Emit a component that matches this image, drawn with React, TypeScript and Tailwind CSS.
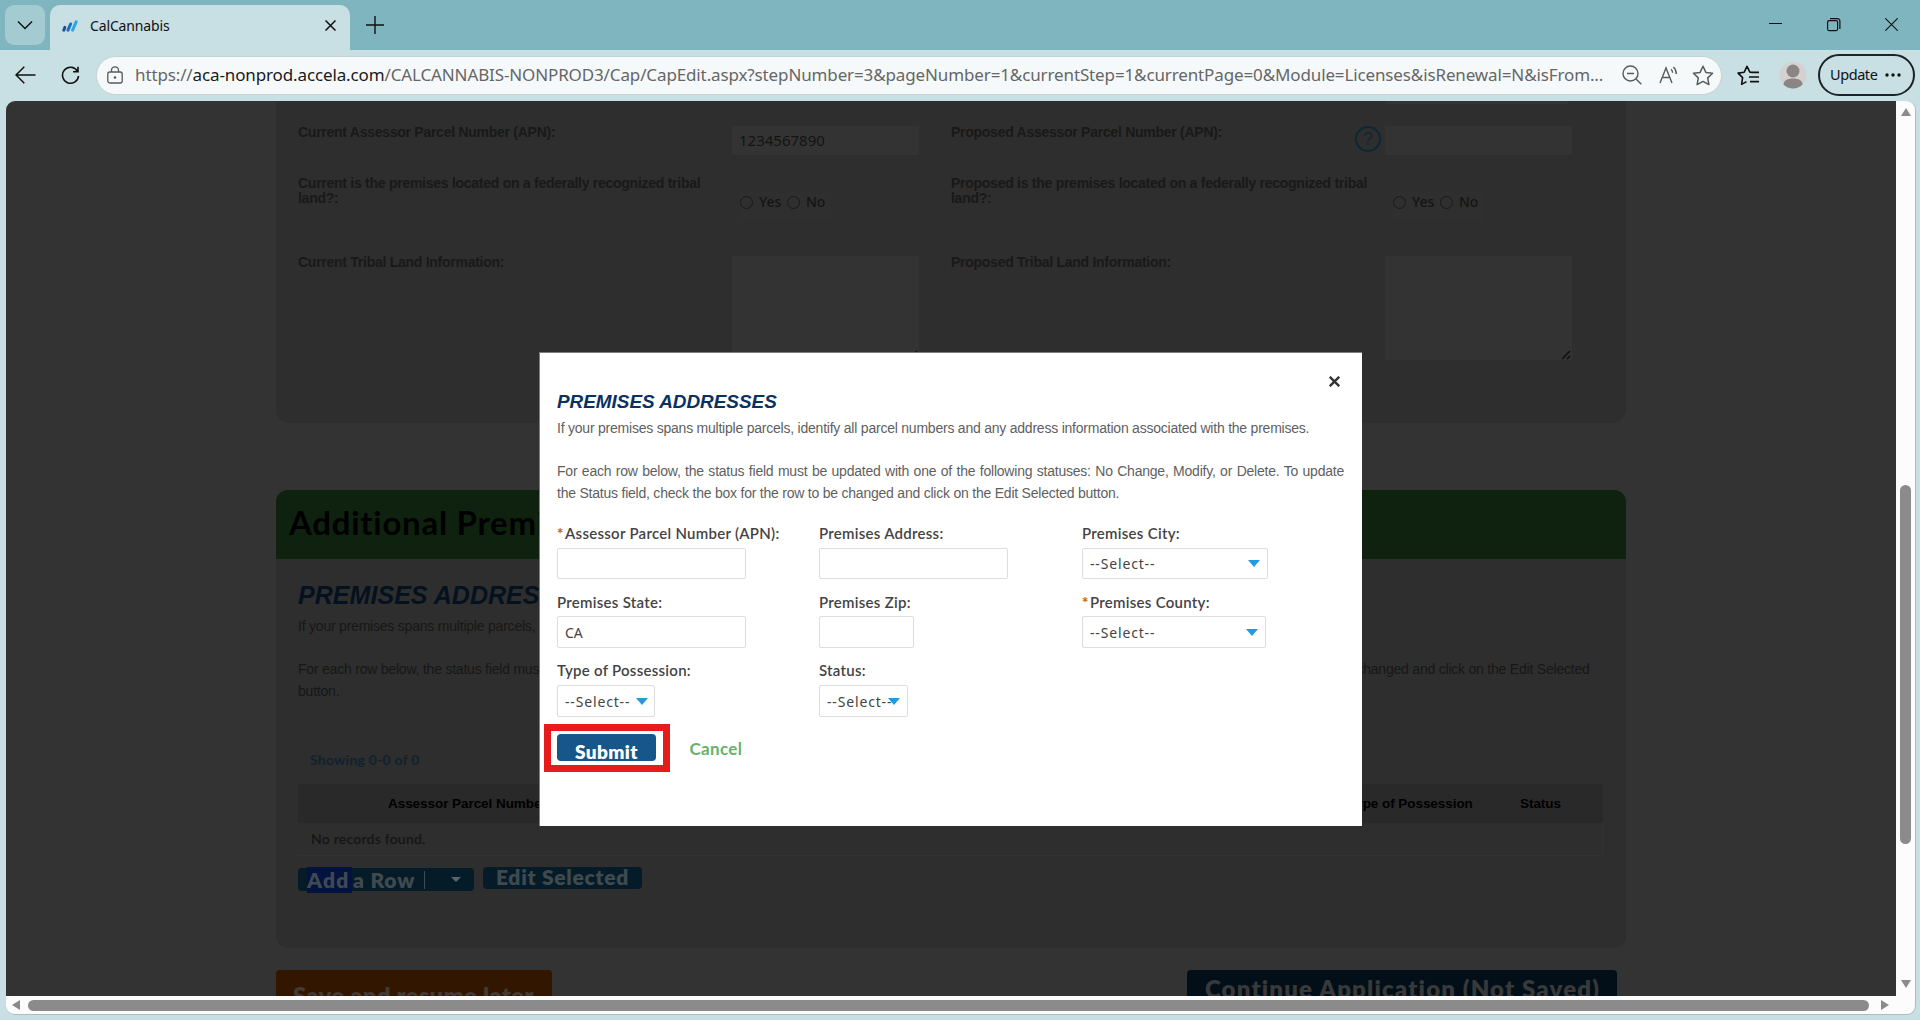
import type { ReactNode } from "react";

function TitleBar() {
  return (
    <div className="flex h-[50px] shrink-0 bg-[#7eb5be] pl-[5px]">
      <div className="mt-[5px] flex h-10 w-10 items-center justify-center rounded-[9px] bg-[#a4cbd2]">
        <svg width="16" height="10" viewBox="0 0 16 10" fill="none" stroke="#111" strokeWidth="1.5">
          <path d="M1 1.5l7 7 7-7" />
        </svg>
      </div>
      <div className="ml-[5px] mt-[5px] flex h-[45px] w-[300px] items-center rounded-t-[10px] bg-[#c8dfe4] pb-[4px] pl-[12px] pr-[14px]">
        <svg width="16" height="12" viewBox="0 0 16 12" fill="none" strokeLinecap="round" strokeWidth="3">
          <path d="M1.8 10.2L2.8 7.4" stroke="#1c4f9c" />
          <path d="M6 10.2L8.6 4" stroke="#1f6fc0" />
          <path d="M10.6 10.2L14.2 1.8" stroke="#27a9e6" />
        </svg>
        <span className="ml-[12px] flex-1 font-['Noto_Sans',sans-serif] text-[14px] tracking-[-0.01em] text-[#111]">CalCannabis</span>
        <svg width="11" height="11" viewBox="0 0 11 11" stroke="#111" strokeWidth="1.5">
          <path d="M0.5 0.5l10 10M10.5 0.5l-10 10" />
        </svg>
      </div>
      <svg className="ml-[16px] mt-[16px]" width="18" height="18" viewBox="0 0 18 18" stroke="#111" strokeWidth="1.4">
        <path d="M9 0v18M0 9h18" />
      </svg>
      <div className="ml-auto flex pr-[22px] pt-[18px]">
        <svg width="13" height="13" viewBox="0 0 13 13" stroke="#111">
          <path d="M0 5.5h13" />
        </svg>
        <svg className="ml-[45px]" width="14" height="14" viewBox="0 0 14 14" fill="none" stroke="#111" strokeWidth="1.2">
          <rect x="0.6" y="2.6" width="10" height="10" rx="1.5" />
          <path d="M3 0.7h7.5a2.4 2.4 0 0 1 2.4 2.4v8" />
        </svg>
        <svg className="ml-[44px]" width="13" height="13" viewBox="0 0 13 13" stroke="#111" strokeWidth="1.1">
          <path d="M0.3 0.3l12.4 12.4M12.7 0.3L0.3 12.7" />
        </svg>
      </div>
    </div>
  );
}

function AddressBar() {
  return (
    <div className="flex h-[51px] shrink-0 items-center bg-[#c8dfe4] pb-px pl-[15px] pr-[5px]">
      <svg width="21" height="18" viewBox="0 0 21 18" fill="none" stroke="#111" strokeWidth="1.5">
        <path d="M20.5 9H1M9.3 0.8L1 9l8.3 8.2" />
      </svg>
      <svg className="ml-[25px]" width="19" height="19" viewBox="0 0 19 19" fill="none" stroke="#111" strokeWidth="1.6">
        <path d="M16.3 5A8 8 0 1 0 17.5 10M17 0.8v4.9h-5" />
      </svg>
      <div className="ml-[16px] flex h-[39px] w-[1626px] items-center rounded-full border border-[#c5d3d6] bg-[#f6f9fa] pl-[10px] pr-[6px]">
        <svg width="16" height="18" viewBox="0 0 16 18" fill="none" stroke="#5a5a5a" strokeWidth="1.3">
          <rect x="0.8" y="6" width="14.4" height="11" rx="2" />
          <path d="M4.5 6V4.3a3.5 3.5 0 0 1 7 0V6" />
          <circle cx="8" cy="11.5" r="0.7" fill="#5a5a5a" />
        </svg>
        <div className="ml-[12px] w-[1484px] whitespace-nowrap font-['Noto_Sans',sans-serif] text-[17px] tracking-[-0.0075em] text-[#666]">
          https://<span className="text-[#1a1a1a]">aca-nonprod.accela.com</span>
          /CALCANNABIS-NONPROD3/Cap/CapEdit.aspx?stepNumber=3&amp;pageNumber=1&amp;currentStep=1&amp;currentPage=0&amp;Module=Licenses&amp;isRenewal=N&amp;isFrom...
        </div>
        <svg className="ml-[3px]" width="20" height="20" viewBox="0 0 20 20" fill="none" stroke="#5a5a5a" strokeWidth="1.4">
          <circle cx="8.5" cy="8.5" r="7.5" />
          <path d="M14 14l5.3 5.3M5 8.5h7" />
        </svg>
        <svg className="ml-[17px]" width="20" height="18" viewBox="0 0 20 18" fill="none" stroke="#5a5a5a" strokeWidth="1.4">
          <path d="M1 17L7 2l6 15M3.2 11.5h7.6M12 3.2c1 .8 1.6 2 1.6 3.6M14.4 1c1.9 1.6 2.9 3.8 2.9 7" />
        </svg>
        <svg className="ml-[13px]" width="22" height="21" viewBox="0 0 22 21" fill="none" stroke="#5a5a5a" strokeWidth="1.5" strokeLinejoin="round">
          <path d="M11 1.3l2.9 6.1 6.7.9-4.9 4.6 1.2 6.7L11 16.4l-5.9 3.2 1.2-6.7L1.4 8.3l6.7-.9z" />
        </svg>
      </div>
      <svg className="ml-[15px]" width="23" height="21" viewBox="0 0 23 21" fill="none" stroke="#111" strokeWidth="1.6" strokeLinejoin="round">
        <path d="M15.5 7.4l-2.6-.2L10 1.3 7.2 7.2l-6.1.9 4.5 4.5-1 6.8 4.9-2.8M14 7.4h8M12 12h10M13 16.6h9" />
      </svg>
      <svg className="ml-[19px]" width="28" height="28" viewBox="0 0 28 28">
        <circle cx="14" cy="14" r="13.5" fill="#d5d1cf" />
        <circle cx="14" cy="10" r="6.5" fill="#8b8685" />
        <path d="M4.5 23.5c0-4 4-6 9.500-6s9.500 2 9.500 6A13.500 13.500 0 0 1 4.500 23.500z" fill="#8b8685" />
      </svg>
      <div className="ml-auto flex h-[42px] w-[97px] items-center rounded-full border-2 border-[#1c2325] pl-[10px]">
        <span className="font-['Noto_Sans',sans-serif] text-[14.500px] tracking-[-0.03em] text-[#111]">Update</span>
        <svg className="ml-[8px]" width="16" height="4" viewBox="0 0 16 4" fill="#111">
          <circle cx="2" cy="2" r="1.7" />
          <circle cx="8" cy="2" r="1.7" />
          <circle cx="14" cy="2" r="1.7" />
        </svg>
      </div>
    </div>
  );
}

function PageLabel({ children }: { children: ReactNode }) {
  return (
    <div className="w-[434px] shrink-0 pr-1 pt-px text-[14px] font-bold leading-[15px] tracking-[-0.019em] text-[#191919]">{children}</div>
  );
}

function YesNo() {
  return (
    <div className="ml-[7px] mt-[17px] flex h-[30px] w-[93px] bg-[#2f2f2f] pl-px font-['Noto_Sans',sans-serif] text-[14px] font-medium leading-[20px] text-[#141414]">
      <span className="mt-[4px] h-[13px] w-[13px] rounded-full border border-[#191919]" />
      <span className="ml-[6px] w-[28px]">Yes</span>
      <span className="mt-[4px] h-[13px] w-[13px] rounded-full border border-[#191919]" />
      <span className="ml-[6px]">No</span>
    </div>
  );
}

function TextArea() {
  return (
    <div className="mt-[2px] flex h-[104px] w-[187px] items-end justify-end bg-[#333]">
      <svg width="11" height="11" viewBox="0 0 11 11" stroke="#0c0c0c" strokeWidth="1.4">
        <path d="M1 10l8-8M6 10l3-3" />
      </svg>
    </div>
  );
}

function ParcelPanel() {
  return (
    <div className="h-[322px] rounded-b-[14px] bg-[#2e2e2e] pl-[22px]">
      <div className="ml-[1087px] h-[3px] w-[183px] bg-[#333]" />
      <div className="mt-[20px] grid grid-cols-[653px_653px] grid-rows-[51px_79px_120px]">
        <div className="flex">
          <PageLabel>Current Assessor Parcel Number (APN):</PageLabel>
          <div className="mt-[2px] flex h-[29px] w-[187px] items-center bg-[#333] pl-[7px] font-['Noto_Sans',sans-serif] text-[15px] text-[#141414]">1234567890</div>
        </div>
        <div className="flex">
          <PageLabel>Proposed Assessor Parcel Number (APN):</PageLabel>
          <div className="ml-[-30px] mr-[4px] mt-[2px] flex h-[26px] w-[26px] items-center justify-center rounded-full border-2 border-[#0d2733] text-[18px] text-[#0d2733]">?</div>
          <div className="mt-[2px] h-[29px] w-[187px] bg-[#333]" />
        </div>
        <div className="flex">
          <PageLabel>Current is the premises located on a federally recognized tribal land?:</PageLabel>
          <YesNo />
        </div>
        <div className="flex">
          <PageLabel>Proposed is the premises located on a federally recognized tribal land?:</PageLabel>
          <YesNo />
        </div>
        <div className="flex">
          <PageLabel>Current Tribal Land Information:</PageLabel>
          <TextArea />
        </div>
        <div className="flex">
          <PageLabel>Proposed Tribal Land Information:</PageLabel>
          <TextArea />
        </div>
      </div>
    </div>
  );
}

function AddressPanel() {
  return (
    <div className="mt-[67px] h-[458px] overflow-hidden rounded-[12px] bg-[#2e2e2e]">
      <div className="flex h-[69px] items-center bg-[#0f220f] pb-[3px] pl-[13px] font-[Lato,sans-serif] text-[33px] font-bold tracking-[0.022em] text-black">
        Additional Premises Addresses
      </div>
      <div className="pl-[22px] pr-[23px]">
        <h2 className="mt-[21px] text-[25px] font-bold italic leading-[30px] tracking-[0.002em] text-[#04111f]">PREMISES ADDRESSES</h2>
        <div className="mt-[6px] text-[14px] leading-[21.75px] tracking-[-0.0153em] text-[#171717]">
          <p>If your premises spans multiple parcels, identify all parcel numbers and any address information associated with the premises.</p>
          <p className="mt-[21px] w-[1300px]">
            For each row below, the status field must be updated with one of the following statuses: No Change, Modify, or Delete. To update the Status field, check the box for the row to be changed and click on the Edit Selected button.
          </p>
        </div>
        <div className="mt-[47.750px] pl-[12px] font-[Lato,sans-serif] text-[14px] font-bold leading-[20px] tracking-[0.017em] text-[#10222f]">Showing 0-0 of 0</div>
        <div className="mt-[14px] flex h-[39px] items-center bg-[#292929] pt-[2px] text-[13.500px] font-bold tracking-[-0.004em] text-black">
          <span className="ml-[90px] w-[960px]">Assessor Parcel Number</span>
          <span className="w-[172px]">Type of Possession</span>
          <span>Status</span>
        </div>
        <div className="flex h-[33px] items-center border-b border-r border-[#323232] pb-px pl-[13px] font-[Lato,sans-serif] text-[14px] font-semibold tracking-[0.015em] text-[#151515]">No records found.</div>
        <div className="mt-[11px] flex font-[Lato,sans-serif] text-[21px] font-extrabold text-[#3f4a50]">
          <div className="mt-px flex h-[23px] w-[176px] items-center rounded-[4px] bg-[#051c28] pl-[9px]">
            <span className="w-[45px] bg-[#04123f] leading-[26px] tracking-[0.06em]">Add</span>
            <span className="ml-px w-[71px] whitespace-nowrap tracking-[0.04em]">a Row</span>
            <span className="h-[18px] w-px bg-[#3f4a50]" />
            <svg className="ml-[26px]" width="10" height="5" viewBox="0 0 10 5" fill="#59636a">
              <path d="M0 0h10l-5 5z" />
            </svg>
          </div>
          <div className="ml-[9px] flex h-[22px] w-[159px] items-center justify-center rounded-[4px] bg-[#051c28] pb-[2px] tracking-[0.035em]">Edit Selected</div>
        </div>
      </div>
    </div>
  );
}

function Field({ label, required, children }: { label: string; required?: boolean; children: ReactNode }) {
  return (
    <div className="flex flex-col">
      <div className="flex h-[20px] items-center whitespace-nowrap pb-[2px] font-[Lato,sans-serif] text-[15px] font-semibold tracking-[0.018em] text-[#444]">
        {required && <span className="mr-px w-[7px] font-black text-[#c96a16]">*</span>}
        {label}
      </div>
      {children}
    </div>
  );
}

function Select({ className }: { className: string }) {
  return (
    <div className={`flex items-center rounded-[2px] border border-[#ddd] pl-[7px] font-['Noto_Sans',sans-serif] text-[14px] text-[#444] ${className}`}>
      <span className="w-0 flex-1 whitespace-nowrap tracking-[0.06em]">--Select--</span>
      <svg className="shrink-0" width="12" height="7" viewBox="0 0 12 7" fill="#1f9bde">
        <path d="M0 0h12L6 7z" />
      </svg>
    </div>
  );
}

function Modal() {
  return (
    <div className="absolute left-[533px] top-[251px] h-[474px] w-[823px] border-l border-t border-[#7f7f7f] bg-white pl-[17px]">
      <svg className="absolute right-[22px] top-[23px]" width="11" height="11" viewBox="0 0 11 11" stroke="#333" strokeWidth="2.4">
        <path d="M0.800 0.800l9.400 9.400M10.200 0.800l-9.400 9.400" />
      </svg>
      <h2 className="mt-[37px] text-[18.900px] font-bold italic leading-[24px] text-[#0a3161]">PREMISES ADDRESSES</h2>
      <div className="mt-[4px] w-[787px] text-justify text-[14px] leading-[21.75px] tracking-[-0.016em] text-[#5f5f5f]">
        <p>If your premises spans multiple parcels, identify all parcel numbers and any address information associated with the premises.</p>
        <p className="mt-[21px]">
          For each row below, the status field must be updated with one of the following statuses: No Change, Modify, or Delete. To update the&nbsp;Status field, check the box for the row to be changed and click on the Edit Selected button.
        </p>
      </div>
      <div className="mt-[19.750px] grid grid-cols-[262px_263px_200px] grid-rows-[69px_68px_56px]">
        <Field label="Assessor Parcel Number (APN):" required>
          <div className="mt-[4px] h-[31px] w-[189px] rounded-[2px] border border-[#ddd]" />
        </Field>
        <Field label="Premises Address:">
          <div className="mt-[4px] h-[31px] w-[189px] rounded-[2px] border border-[#ddd]" />
        </Field>
        <Field label="Premises City:">
          <Select className="mt-[4px] h-[31px] w-[186px] pr-[7px]" />
        </Field>
        <Field label="Premises State:">
          <div className="mt-[3px] flex h-[32px] w-[189px] items-center rounded-[2px] border border-[#ddd] pl-[7px] pt-px font-['Noto_Sans',sans-serif] text-[14px] text-[#444]">CA</div>
        </Field>
        <Field label="Premises Zip:">
          <div className="mt-[3px] h-[32px] w-[95px] rounded-[2px] border border-[#ddd]" />
        </Field>
        <Field label="Premises County:" required>
          <Select className="mt-[3px] h-[32px] w-[184px] pr-[7px]" />
        </Field>
        <Field label="Type of Possession:">
          <Select className="mt-[4px] h-[32px] w-[98px] pr-[6px]" />
        </Field>
        <Field label="Status:">
          <Select className="mt-[4px] h-[32px] w-[89px] pr-[7px]" />
        </Field>
      </div>
      <div className="ml-[-13px] mt-[7px] flex font-[Lato,sans-serif] font-bold">
        <div className="h-[48px] w-[126px] border-[7px] border-[#e61b1b] pl-[6px] pt-[3px]">
          <div className="flex h-[27px] w-[99px] items-center justify-center rounded-[4px] bg-[#17568a] pt-[9px] text-[19px] font-extrabold leading-[18px] tracking-[0.02em] text-white">Submit</div>
        </div>
        <span className="ml-[19.500px] mt-[13px] text-[17px] leading-[24px] tracking-[0.02em] text-[#67b26a]">Cancel</span>
      </div>
    </div>
  );
}

export default function App() {
  return (
    <div className="flex h-[1020px] w-[1920px] flex-col overflow-hidden bg-[#c8dfe4] font-['Liberation_Sans',Arial,sans-serif]">
      <TitleBar />
      <AddressBar />
      <div className="ml-[6px] h-[914px] w-[1910px] overflow-hidden rounded-[9px] border-b border-r border-[#a9bdc1] bg-[#fcfcfc]">
        <div className="flex">
          <div className="relative h-[895px] w-[1890px] overflow-hidden bg-[#333]">
            <div className="ml-[270px] w-[1350px]">
              <ParcelPanel />
              <AddressPanel />
              <div className="mt-[22px] flex justify-between pr-[9px] font-[Lato,sans-serif] text-[24px] font-extrabold text-[#393939]">
                <div className="h-[50px] w-[276px] whitespace-nowrap rounded-[4px] bg-[#331600] pl-[17px] pt-[8px] tracking-[0.008em] text-[#433a33]">Save and resume later</div>
                <div className="h-[50px] w-[430px] whitespace-nowrap rounded-[4px] bg-[#020f18] pl-[18px] pt-[1px] tracking-[0.048em]">Continue Application (Not Saved)</div>
              </div>
            </div>
            <Modal />
          </div>
          <div className="flex w-[19px] flex-col items-center">
            <svg className="mt-[7px]" width="10" height="8" viewBox="0 0 10 8" fill="#8a8a8a">
              <path d="M5 0l5 8H0z" />
            </svg>
            <div className="mt-[369px] h-[359px] w-[11px] rounded-full bg-[#8b8b8b]" />
            <svg className="mt-[136px]" width="10" height="8" viewBox="0 0 10 8" fill="#8a8a8a">
              <path d="M0 0h10L5 8z" />
            </svg>
          </div>
        </div>
        <div className="flex h-[18px] items-center pl-[6px]">
          <svg width="8" height="10" viewBox="0 0 8 10" fill="#8a8a8a">
            <path d="M8 0v10L0 5z" />
          </svg>
          <div className="ml-[8px] h-[11px] w-[1841px] rounded-full bg-[#8b8b8b]" />
          <svg className="ml-[12px]" width="8" height="10" viewBox="0 0 8 10" fill="#8a8a8a">
            <path d="M0 0l8 5-8 5z" />
          </svg>
        </div>
      </div>
    </div>
  );
}
